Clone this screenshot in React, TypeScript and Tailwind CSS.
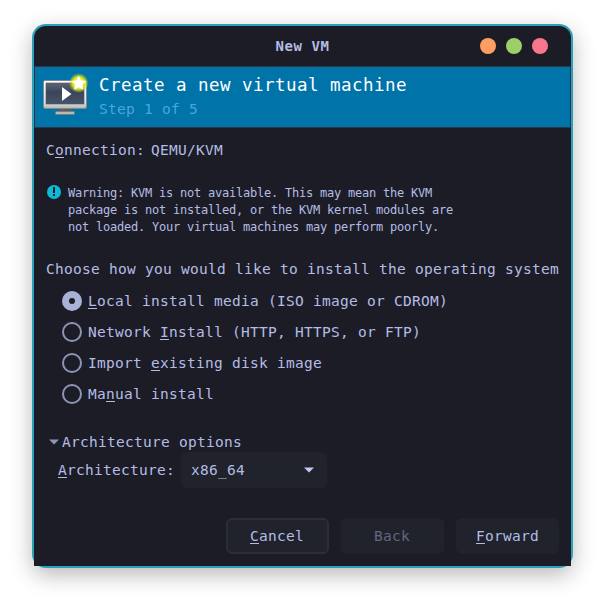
import React from "react";

function Key({ children }: { children: string }) {
  return (
    <span className="underline decoration-1 underline-offset-[2px] [text-decoration-skip-ink:none]">
      {children}
    </span>
  );
}

function MachineIcon() {
  return (
    <svg width="48" height="48" viewBox="0 0 48 48" className="block">
      <defs>
        <linearGradient id="screen" x1="0" y1="0" x2="0" y2="1">
          <stop offset="0" stopColor="#5a6675" />
          <stop offset="0.45" stopColor="#3a4658" />
          <stop offset="1" stopColor="#46536a" />
        </linearGradient>
        <linearGradient id="frame" x1="0" y1="0" x2="0" y2="1">
          <stop offset="0" stopColor="#ffffff" />
          <stop offset="0.8" stopColor="#e0e0de" />
          <stop offset="1" stopColor="#b4b4b2" />
        </linearGradient>
        <radialGradient id="glow">
          <stop offset="0" stopColor="#f6f220" />
          <stop offset="0.6" stopColor="#e2e61c" />
          <stop offset="1" stopColor="#c2d81c" stopOpacity="0" />
        </radialGradient>
      </defs>
      <path d="M18 36h12v4H18z" fill="#5c5f60" />
      <rect x="14.5" y="39.5" width="19" height="3" rx="1" fill="#b9bab8" stroke="#7a7d7e" />
      <rect x="2.5" y="8.5" width="43" height="28" rx="1.5" fill="url(#frame)" stroke="#85898b" />
      <rect x="5" y="11" width="38" height="21" fill="url(#screen)" stroke="#4a5562" strokeWidth="0.6" />
      <path d="M21 15v14l9.5-7z" fill="#fff" />
      <circle cx="37.7" cy="11" r="10" fill="url(#glow)" />
      <path
        d="M37.7 4.1l2.2 4.4 4.7.7-3.4 3.4.8 4.8-4.3-2.3-4.2 2.3.8-4.8-3.4-3.4 4.7-.7z"
        fill="#fff"
        stroke="#fff"
        strokeWidth="0.5"
        strokeLinejoin="round"
      />
    </svg>
  );
}

function Choice({ checked, children }: { checked?: boolean; children: React.ReactNode }) {
  return (
    <label className="flex h-[31px] items-center gap-[6px]">
      {checked ? (
        <span className="flex size-5 items-center justify-center rounded-full bg-[#a9b1d6]">
          <span className="size-[6px] rounded-full bg-[#1c1c27]" />
        </span>
      ) : (
        <span className="size-5 rounded-full border-2 border-[#8d94b5]" />
      )}
      <span>{children}</span>
    </label>
  );
}

export default function App() {
  return (
    <div className="h-[608px] w-[605px] bg-white pt-6 pl-8 font-['DejaVu_Sans_Mono',monospace] text-[14.5px] leading-[20px] tracking-[0.27px] text-[#b4bce4]">
      <div className="h-[544px] w-[541px] rounded-[14px] bg-[#2aa1b9] p-[2px] shadow-[0_7px_22px_rgba(0,0,0,0.28)]">
        <div className="flex h-full flex-col rounded-t-[12px] bg-[#1c1c27]">
          <header className="grid h-10 grid-cols-[1fr_auto_1fr] items-center pr-[23px] pl-[23px]">
            <span />
            <h1 className="text-[14px] font-bold tracking-[0.57px]">New VM</h1>
            <div className="flex justify-end gap-[10px]">
              <span className="size-4 rounded-full bg-[#ff9e64]" />
              <span className="size-4 rounded-full bg-[#9ece6a]" />
              <span className="size-4 rounded-full bg-[#f7768e]" />
            </div>
          </header>

          <section className="flex h-[62px] shrink-0 gap-[10px] border border-[#2f3549] bg-[#0073a9] pt-[6px] pl-[6px]">
            <div className="-mt-px">
              <MachineIcon />
            </div>
            <div>
              <h2 className="text-[17.5px] leading-6 tracking-[0.465px] text-white">Create a new virtual machine</h2>
              <p className="leading-6 text-[#4ba6dc]">Step 1 of 5</p>
            </div>
          </section>

          <main className="flex flex-1 flex-col px-3 pt-3 pb-3">
            <div className="flex gap-[6px]">
              <span>C<Key>o</Key>nnection:</span>
              <span>QEMU/KVM</span>
            </div>

            <div className="mt-6 flex gap-[7px]">
              <svg width="15" height="15" viewBox="0 0 15 15" className="shrink-0">
                <circle cx="8" cy="8" r="7" fill="#0db9d7" />
                <path d="M7 3h2v6H7zM7 10h2v2H7z" fill="#1c1c27" />
              </svg>
              <p className="pt-px text-[12px] leading-[17px] tracking-[-0.224px] whitespace-pre">
                {"Warning: KVM is not available. This may mean the KVM\npackage is not installed, or the KVM kernel modules are\nnot loaded. Your virtual machines may perform poorly."}
              </p>
            </div>

            <p className="mt-[23px] whitespace-nowrap">Choose how you would like to install the operating system</p>

            <div className="mt-[6px] pl-4">
              <Choice checked><Key>L</Key>ocal install media (ISO image or CDROM)</Choice>
              <Choice>Network <Key>I</Key>nstall (HTTP, HTTPS, or FTP)</Choice>
              <Choice>Import <Key>e</Key>xisting disk image</Choice>
              <Choice>Ma<Key>n</Key>ual install</Choice>
            </div>

            <div className="mt-[23px] flex items-center gap-[3px] pl-[3px]">
              <svg width="10" height="6" viewBox="0 0 10 6">
                <path d="M0 .5h10L5 5.5z" fill="#8d94b5" />
              </svg>
              <span>Architecture options</span>
            </div>
            <div className="flex items-center gap-[6px] pl-3">
              <span><Key>A</Key>rchitecture:</span>
              <div className="flex h-9 w-[146px] items-center justify-between rounded-[6px] bg-[#20222c] pr-[13px] pl-[10px]">
                <span>x86_64</span>
                <svg width="10" height="6" viewBox="0 0 10 6">
                  <path d="M0 .5h10L5 5.5z" fill="#c0caf5" />
                </svg>
              </div>
            </div>

            <footer className="mt-auto flex justify-end gap-3">
              <button className="h-9 w-[103px] rounded-[6px] border-2 border-[#2a2d3a] bg-[#20222c] pr-px"><Key>C</Key>ancel</button>
              <button className="h-9 w-[103px] rounded-[6px] bg-[#20222c] pr-px text-[#62677f]">Back</button>
              <button className="h-9 w-[103px] rounded-[6px] bg-[#20222c]"><Key>F</Key>orward</button>
            </footer>
          </main>
        </div>
      </div>
    </div>
  );
}
